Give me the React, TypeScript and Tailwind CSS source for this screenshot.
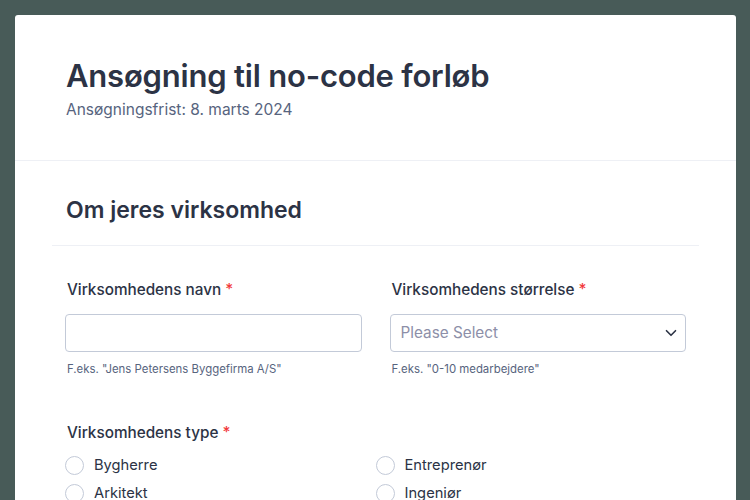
import { ChevronDown } from 'lucide-react';

const font = { fontFamily: 'Inter, "Noto Sans", sans-serif' };

function Label({ text }: { text: string }) {
  return (
    <div className="pl-[2px] text-[15.3px] font-medium leading-[20px] text-[#2c3345]">
      {text} <span className="text-[#f23a3c]">*</span>
    </div>
  );
}

function Radio({ label }: { label: string }) {
  return (
    <label className="flex h-[28px] items-center gap-[10px]">
      <span className="h-[19px] w-[19px] rounded-full border border-[#c3cad8] bg-white" />
      <span className="text-[14.7px] leading-[20px] text-[#2c3345]">{label}</span>
    </label>
  );
}

export default function App() {
  return (
    <div className="min-h-screen bg-[#485b58] pl-[15px] pr-[14px] pt-[15px]" style={font}>
      <div className="h-[600px] rounded-t-[3px] bg-white">
        {/* Header */}
        <div className="border-b border-[#eef0f5] px-[51px] pt-[42px] pb-[40px]">
          <h1 className="text-[31px] font-semibold leading-[38px] tracking-[-0.2px] text-[#2c3345]">
            Ansøgning til no-code forløb
          </h1>
          <p className="mt-[5px] text-[15.5px] leading-[20px] text-[#57647e]">
            Ansøgningsfrist: 8. marts 2024
          </p>
        </div>

        {/* Section */}
        <div className="px-[37px]">
          <div className="border-b border-[#eef0f5] px-[14px] pt-[34px] pb-[20px]">
            <h2 className="text-[23px] font-semibold leading-[30px] text-[#2c3345]">
              Om jeres virksomhed
            </h2>
          </div>

          <div className="px-[13px] pt-[34px]">
            <div className="grid grid-cols-2 gap-[28px]">
              <div>
                <Label text="Virksomhedens navn" />
                <div className="mt-[14px] h-[38px] rounded-[4px] border border-[#c3cad8] bg-white" />
                <div className="mt-[9px] pl-[2px] text-[11.4px] leading-[16px] text-[#57647e]">
                  F.eks. "Jens Petersens Byggefirma A/S"
                </div>
              </div>
              <div>
                <Label text="Virksomhedens størrelse" />
                <div className="mt-[14px] flex h-[38px] items-center justify-between rounded-[4px] border border-[#c3cad8] bg-white pl-[10px] pr-[5px]">
                  <span className="text-[15.3px] text-[#8d8fa8]">Please Select</span>
                  <ChevronDown size={18} strokeWidth={2.2} className="text-[#2c3345]" />
                </div>
                <div className="mt-[9px] pl-[2px] text-[11.4px] leading-[16px] text-[#57647e]">
                  F.eks. "0-10 medarbejdere"
                </div>
              </div>
            </div>

            <div className="mt-[46px]">
              <Label text="Virksomhedens type" />
              <div className="mt-[8px] grid grid-cols-2">
                <div>
                  <Radio label="Bygherre" />
                  <Radio label="Arkitekt" />
                </div>
                <div>
                  <Radio label="Entreprenør" />
                  <Radio label="Ingeniør" />
                </div>
              </div>
            </div>
          </div>
        </div>
      </div>
    </div>
  );
}
